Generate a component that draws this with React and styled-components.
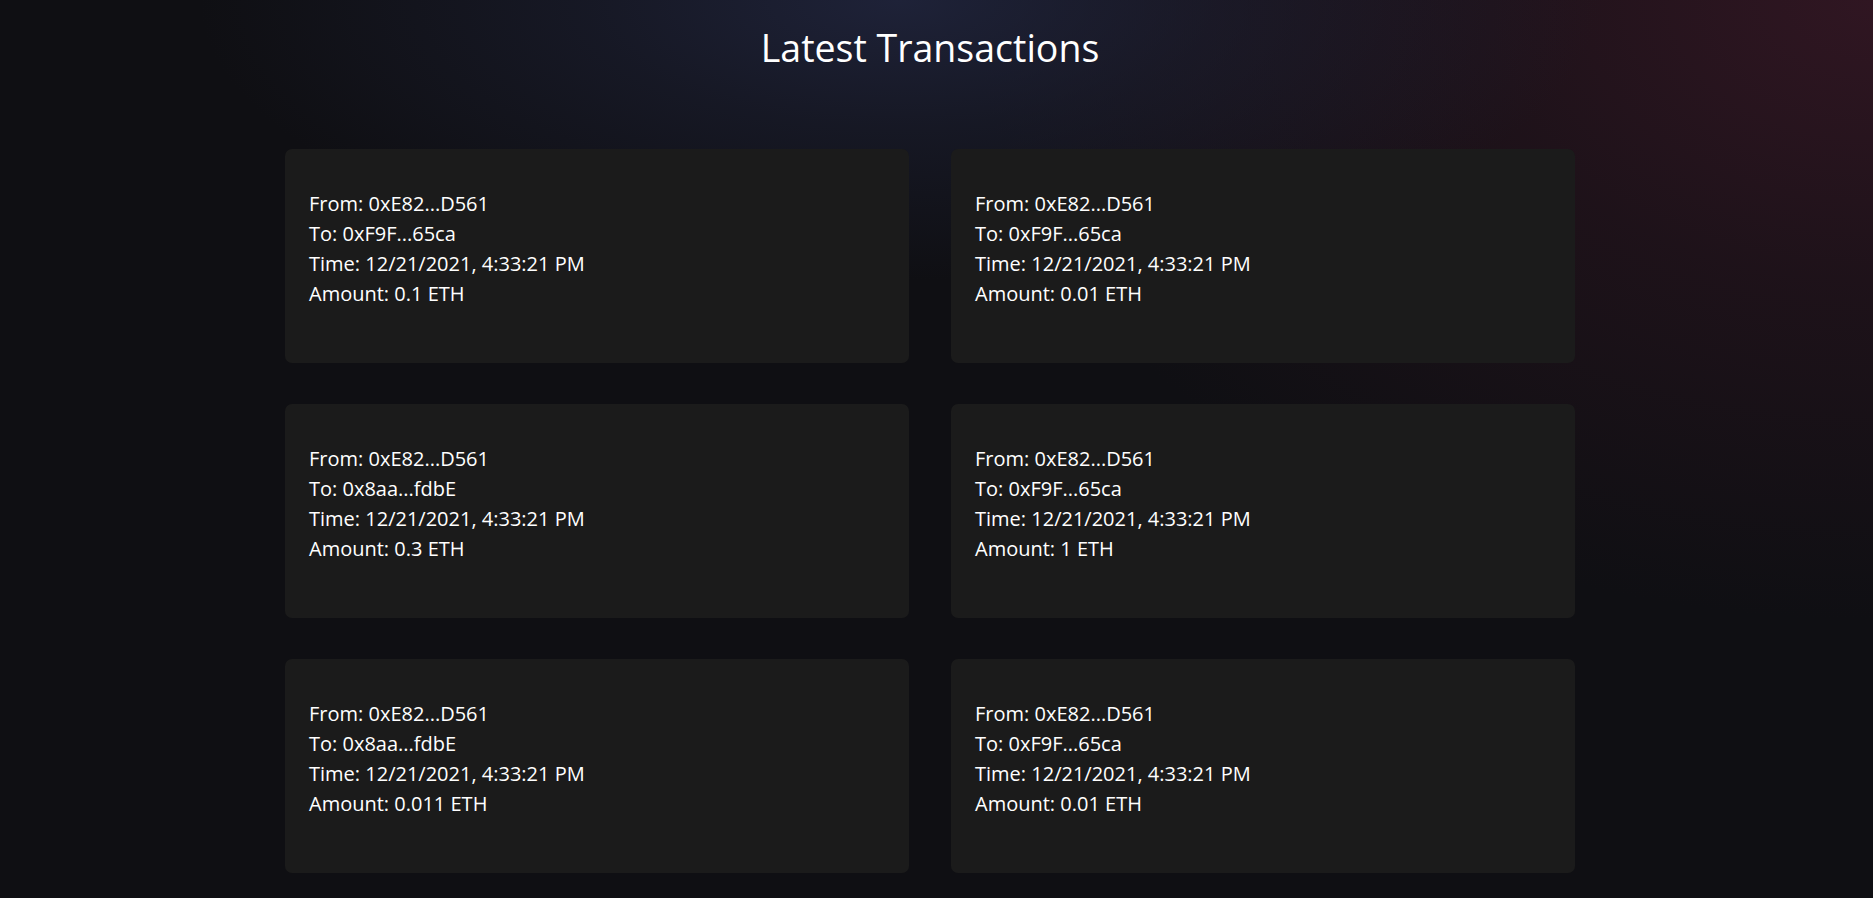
import React from "react";
import styled, { createGlobalStyle } from "styled-components";

const GlobalStyle = createGlobalStyle`
  html, body {
    margin: 0;
    padding: 0;
    background: #0f0f13;
  }
  body {
    font-family: "Open Sans", "Noto Sans", sans-serif;
    color: #ffffff;
  }
  * { box-sizing: border-box; }
`;

const Page = styled.div`
  min-height: 898px;
  background-color: #0f0f13;
  background-image:
    radial-gradient(ellipse 700px 280px at 48% 0%, rgba(31, 35, 58, 0.95) 0%, rgba(31, 35, 58, 0.45) 45%, transparent 100%),
    radial-gradient(ellipse 900px 620px at 100% 0%, rgba(48, 22, 34, 1) 0%, rgba(40, 20, 30, 0.6) 45%, transparent 100%);
  padding: 23.5px 13px 25px 0;
`;

const Title = styled.h1`
  margin: 0;
  text-align: center;
  font-size: 37.5px;
  line-height: 48px;
  font-weight: 400;
  color: #ffffff;
`;

const Grid = styled.div`
  display: grid;
  grid-template-columns: repeat(2, 624px);
  column-gap: 42px;
  row-gap: 41px;
  justify-content: center;
  margin-top: 77.5px;
`;

const Card = styled.div`
  height: 214px;
  background: #1b1b1b;
  border-radius: 7px;
  padding: 40px 24px 0 24px;
`;

const Line = styled.p`
  margin: 0;
  font-size: 20px;
  line-height: 30px;
  color: #ffffff;
`;

const txs = [
  { from: "0xE82...D561", to: "0xF9F...65ca", amount: "0.1" },
  { from: "0xE82...D561", to: "0xF9F...65ca", amount: "0.01" },
  { from: "0xE82...D561", to: "0x8aa...fdbE", amount: "0.3" },
  { from: "0xE82...D561", to: "0xF9F...65ca", amount: "1" },
  { from: "0xE82...D561", to: "0x8aa...fdbE", amount: "0.011" },
  { from: "0xE82...D561", to: "0xF9F...65ca", amount: "0.01" },
];

export default function App() {
  return (
    <>
      <GlobalStyle />
      <Page>
        <Title>Latest Transactions</Title>
        <Grid>
          {txs.map((t, i) => (
            <Card key={i}>
              <Line>From: {t.from}</Line>
              <Line>To: {t.to}</Line>
              <Line>Time: 12/21/2021, 4:33:21 PM</Line>
              <Line>Amount: {t.amount} ETH</Line>
            </Card>
          ))}
        </Grid>
      </Page>
    </>
  );
}
